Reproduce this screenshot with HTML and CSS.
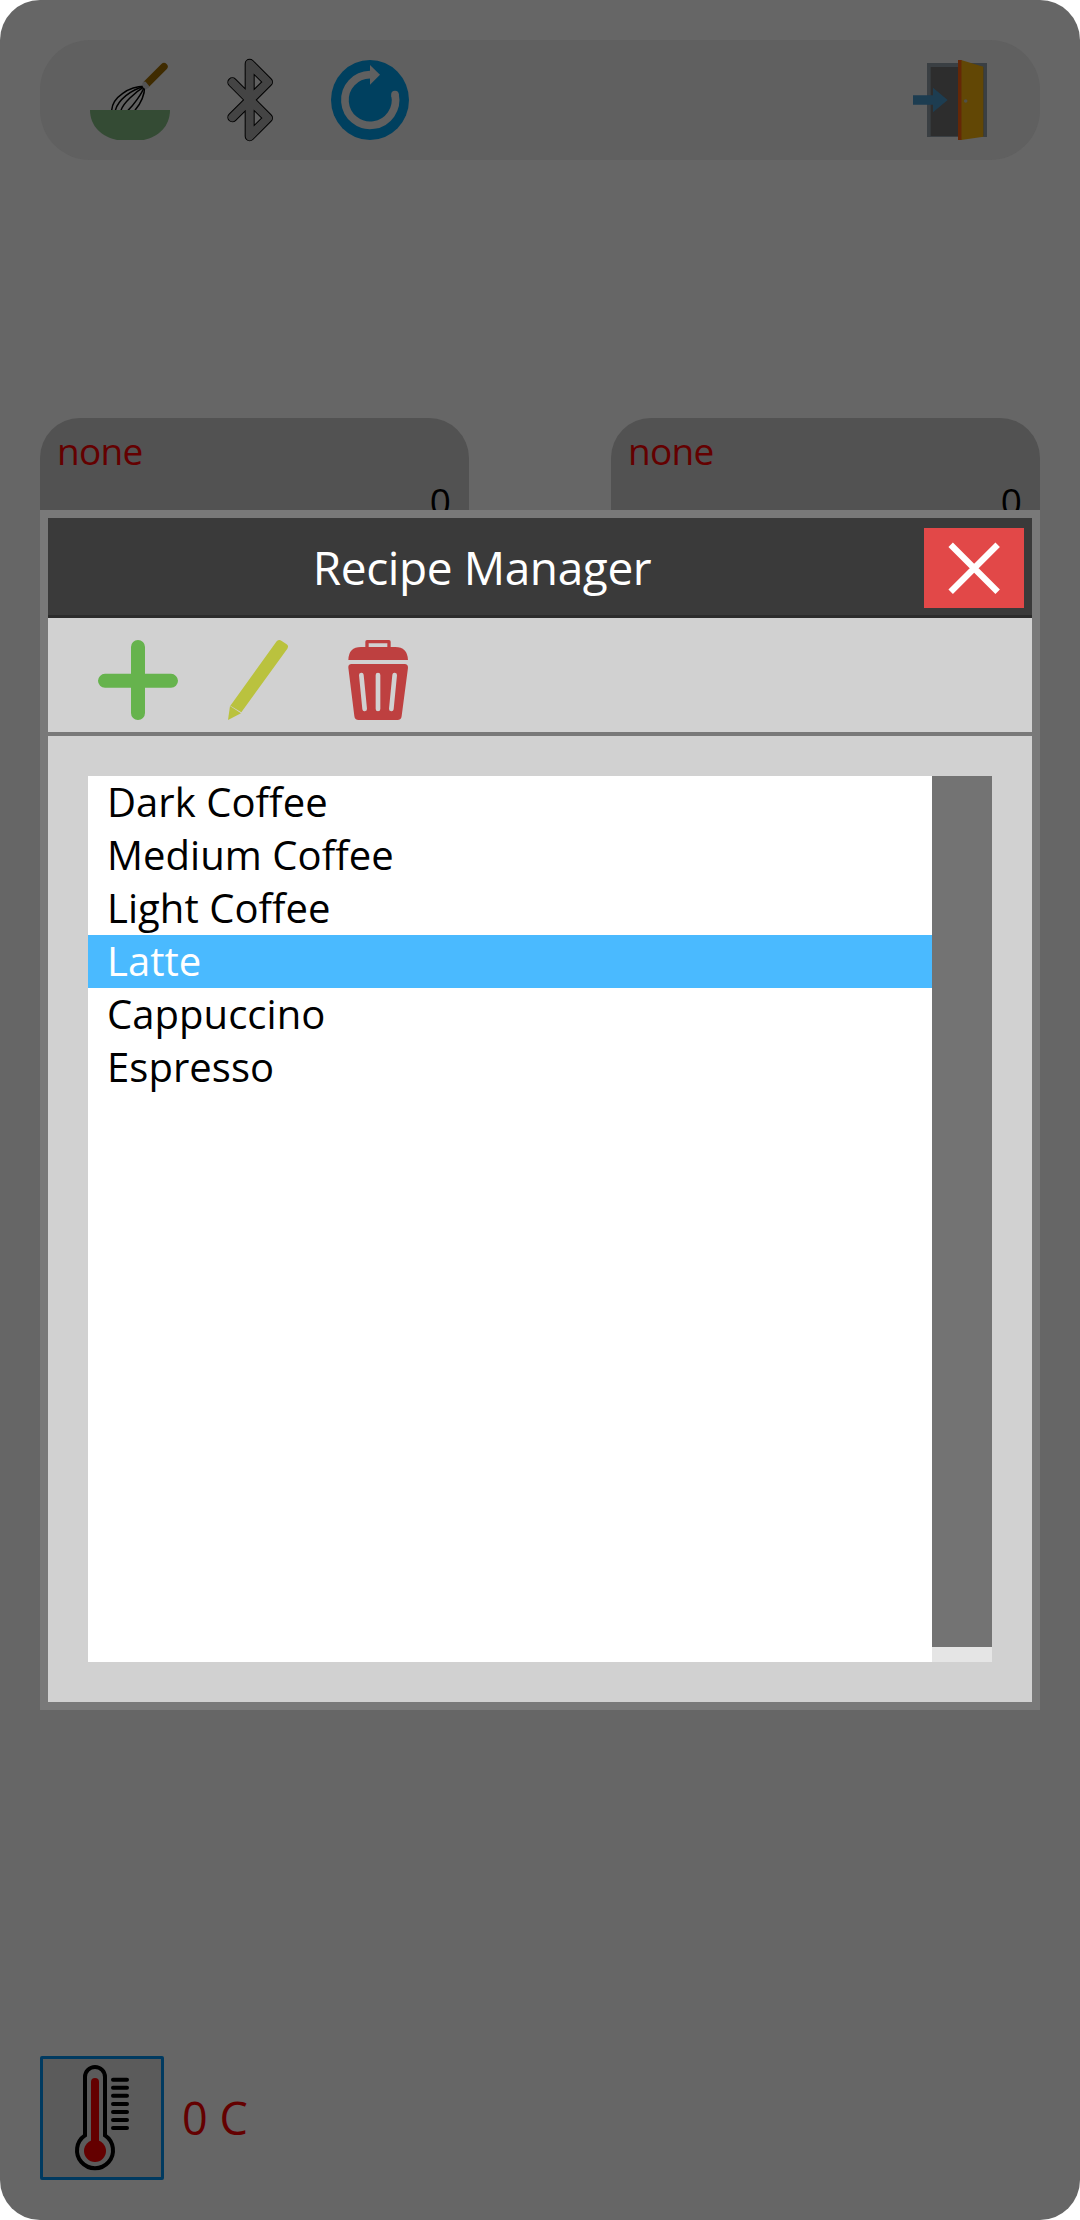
FILE: index.html
```html
<!DOCTYPE html>
<html lang="en">
<head>
<meta charset="utf-8">
<title>Recipe Manager</title>
<link rel="stylesheet" href="styles.css">
</head>
<body>
<div class="screen">
  <header class="topbar">
    <svg class="icon" viewBox="270 180 240 240">
      <g fill="none" stroke="#000" stroke-width="4.5">
        <path d="M335 331C337 291 389 259 433 259"/>
        <path d="M346 331C354 300 394 268 432 260"/>
        <path d="M363 331C369 310 405 277 433 260"/>
        <path d="M384 331C400 316 425 282 433 260"/>
        <path d="M405 331C426 306 434 280 434 259"/>
      </g>
      <path d="M441 251L492 200" stroke="#3f2b00" stroke-width="22" stroke-linecap="round"/>
      <path d="M427 249Q430 243 437 245L448 259Q446 267 438 268Q425 263 427 249Z" fill="#535353"/>
      <path d="M270 330H510C510 379 475 411 431 420H351C306 411 270 379 270 330Z" fill="#344b34"/>
    </svg>
    <svg class="icon" viewBox="630 180 240 240">
      <g fill="none" stroke-linecap="round" stroke-linejoin="round">
        <path d="M697 247L804 354L749 409V191L804 246L697 352" stroke="#000" stroke-width="30"/>
        <path d="M697 247L804 354L749 409V191L804 246L697 352" stroke="#444" stroke-width="24"/>
      </g>
    </svg>
    <svg class="icon" viewBox="990 180 240 240">
      <ellipse cx="1110" cy="300" rx="117" ry="120" fill="#00405f"/>
      <path d="M1110 224A76 76 0 1 0 1185 284" fill="none" stroke="#606060" stroke-width="23" stroke-linecap="butt"/>
      <circle cx="1185" cy="284" r="11.5" fill="#606060"/>
      <path d="M1110 195L1140 224L1110 254Z" fill="#606060"/>
    </svg>
    <svg class="icon icon-exit" viewBox="150 180 240 240">
      <rect x="201" y="189" width="180" height="222" fill="#3a3f43"/>
      <rect x="212" y="201" width="158" height="207" fill="#2d2d2d"/>
      <path d="M303 180L370 200V410L303 420Z" fill="#624705"/>
      <rect x="294" y="180" width="10" height="240" fill="#652707"/>
      <rect x="304" y="180" width="2" height="240" fill="#633708"/>
      <circle cx="317" cy="303" r="5.500" fill="#505048"/>
      <path d="M159 286H219V263L263 300L219 337V314H159Z" fill="#1d3d51"/>
    </svg>
  </header>

  <main class="readings">
    <section class="card"><span class="card-name">none</span><span class="card-value">0</span></section>
    <section class="card"><span class="card-name">none</span><span class="card-value">0</span></section>
  </main>

  <footer class="temperature">
    <div class="thermo">
      <svg class="thermo-icon" viewBox="129 87 354 354">
        <path d="M255 316V141A30 30 0 0 1 315 141V316A54 54 0 1 1 255 316Z" fill="none" stroke="#000" stroke-width="12"/>
        <path d="M285 156V350" stroke="#640000" stroke-width="24" stroke-linecap="round"/>
        <circle cx="285" cy="363" r="33" fill="#640000"/>
        <path d="M339 149H381M339 173H381M339 197.500H381M339 222H381M339 246H381M339 270H381M339 294H381" stroke="#000" stroke-width="12" stroke-linecap="round"/>
      </svg>
    </div>
    <span class="degrees">0 C</span>
  </footer>

  <div class="dialog" role="dialog">
    <div class="titlebar">
      <h1 class="title">Recipe Manager</h1>
      <button class="close" aria-label="Close">
        <svg class="close-icon" viewBox="0 0 300 240"><path d="M80 50L221 191M221 50L80 191" stroke="#fff" stroke-width="19"/></svg>
      </button>
    </div>
    <div class="toolbar">
      <svg class="icon" viewBox="204 420 240 240">
        <path d="M324 441V639M225 542.500H423" stroke="#66b34d" stroke-width="42" stroke-linecap="round"/>
      </svg>
      <svg class="icon" viewBox="564 420 240 240">
        <path d="M740 424Q747 417 754 422L770 433Q777 438 772 446L634 637L601 617Z" fill="#bac23e"/>
        <path d="M600 618L633 640L594 660Z" fill="#bac23e"/>
      </svg>
      <svg class="icon" viewBox="924 420 240 240">
        <path d="M1011 444V425H1077V444" fill="none" stroke="#be4040" stroke-width="10" stroke-linejoin="round"/>
        <path d="M955 480Q956 441 993 441H1096Q1132 441 1134 480Z" fill="#be4040"/>
        <path d="M965 492H1124Q1134 492 1134 503L1115 648Q1114 660 1102 660H986Q974 660 973 648L955 503Q954 492 965 492Z" fill="#be4040"/>
        <path d="M994 525L1004 627M1044 525V627M1094 525L1084 627" stroke="#d1d1d1" stroke-width="14" stroke-linecap="round"/>
      </svg>
    </div>
    <div class="content">
      <ul class="recipes">
        <li class="recipe">Dark Coffee</li>
        <li class="recipe">Medium Coffee</li>
        <li class="recipe">Light Coffee</li>
        <li class="recipe selected">Latte</li>
        <li class="recipe">Cappuccino</li>
        <li class="recipe">Espresso</li>
      </ul>
      <div class="scrollbar"><div class="thumb"></div></div>
    </div>
  </div>
</div>
</body>
</html>
```

FILE: styles.css
```css
* { box-sizing: border-box; }
body {
  margin: 0;
  background: #fff;
  font-family: "Open Sans", "Noto Sans", sans-serif;
  font-weight: 430;
}
.screen {
  position: relative;
  display: flex;
  flex-direction: column;
  width: 1080px;
  height: 2220px;
  padding: 40px;
  background: #666;
  border-radius: 40px;
}
.icon { display: block; width: 80px; height: 80px; overflow: visible; }
.topbar {
  display: flex;
  align-items: center;
  gap: 40px;
  height: 120px;
  padding: 0 50px;
  background: #606060;
  border-radius: 50px;
}
.icon-exit { margin-left: auto; }
.readings {
  display: flex;
  justify-content: space-between;
  margin-top: 258px;
}
.card {
  display: flex;
  flex-direction: column;
  width: 429px;
  height: 180px;
  padding: 8px 18px 8px 17px;
  background: #525252;
  border-radius: 40px;
  font-size: 37px;
  line-height: 50px;
}
.card-name { color: #640000; letter-spacing: -.7px; }
.card-value { align-self: flex-end; color: #000; }
.temperature {
  display: flex;
  align-items: center;
  gap: 18px;
  margin-top: auto;
}
.thermo {
  width: 124px;
  height: 124px;
  background: #5b5b5b;
  border: 3px solid #003a60;
  border-radius: 2px;
}
.thermo-icon { display: block; width: 118px; height: 118px; }
.degrees { color: #640000; font-size: 45px; line-height: 60px; }

.dialog {
  position: absolute;
  top: 510px;
  left: 40px;
  display: flex;
  flex-direction: column;
  width: 1000px;
  height: 1200px;
  background: #d1d1d1;
  border: 8px solid #797979;
}
.titlebar {
  display: flex;
  height: 100px;
  padding: 10px 8px 0 0;
  background: #3a3a3a;
  border-bottom: 3px solid #2c2c2c;
}
.title {
  flex: 1;
  margin: 0;
  padding-right: 8px;
  color: #fff;
  font-size: 46px;
  font-weight: 430;
  letter-spacing: -.4px;
  line-height: 78px;
  text-align: center;
}
.close { width: 100px; height: 80px; padding: 0; border: 0; background: #e24848; }
.close-icon { display: block; width: 100px; height: 80px; }
.toolbar {
  display: flex;
  gap: 40px;
  height: 118px;
  padding: 22px 50px 0;
  border-bottom: 4px solid #797979;
}
.content { display: flex; flex: 1; padding: 40px; }
.recipes { flex: 1; margin: 0; padding: 0; background: #fff; list-style: none; }
.recipe {
  height: 53px;
  padding-left: 19px;
  color: #000;
  font-size: 40px;
  letter-spacing: .05px;
  line-height: 51px;
}
.selected { background: #4abaff; color: #fff; }
.scrollbar { width: 60px; padding-bottom: 15px; background: #e5e5e5; }
.thumb { height: 100%; background: #737373; }
```
